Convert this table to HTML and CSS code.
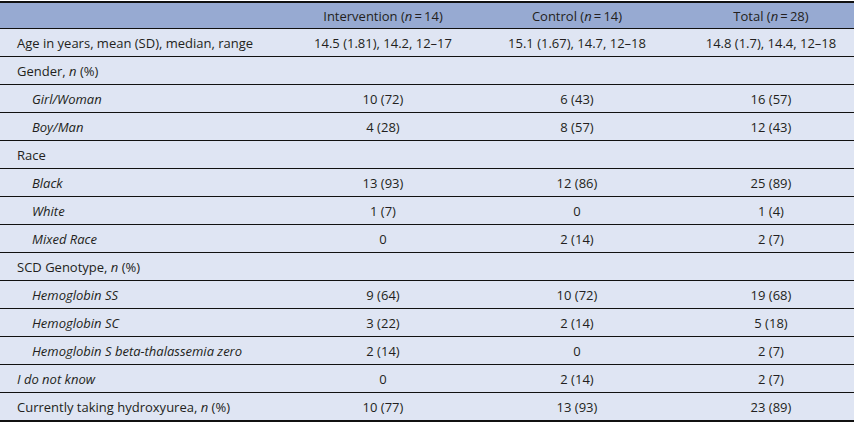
FILE: index.html
```html
<!DOCTYPE html>
<html lang="en">
<head>
    <meta charset="UTF-8">
    <title>Participant characteristics</title>
    <link rel="stylesheet" href="styles.css">
</head>
<body>
<table class="table">
    <colgroup>
        <col class="table__col-label">
        <col class="table__col-group">
        <col class="table__col-control">
        <col class="table__col-total">
    </colgroup>
    <thead>
    <tr class="table__head">
        <th></th>
        <th>Intervention (<i>n</i>&#8201;=&#8201;14)</th>
        <th>Control (<i>n</i>&#8201;=&#8201;14)</th>
        <th class="table__total">Total (<i>n</i>&#8201;=&#8201;28)</th>
    </tr>
    </thead>
    <tbody>
    <tr>
        <td class="table__label">Age in years, mean (SD), median, range</td>
        <td>14.5 (1.81), 14.2, 12–17</td>
        <td>15.1 (1.67), 14.7, 12–18</td>
        <td class="table__total">14.8 (1.7), 14.4, 12–18</td>
    </tr>
    <tr>
        <td class="table__label">Gender, <i>n</i> (%)</td>
        <td></td><td></td><td class="table__total"></td>
    </tr>
    <tr>
        <td class="table__label table__label--sub">Girl/Woman</td>
        <td>10 (72)</td><td>6 (43)</td><td class="table__total">16 (57)</td>
    </tr>
    <tr>
        <td class="table__label table__label--sub">Boy/Man</td>
        <td>4 (28)</td><td>8 (57)</td><td class="table__total">12 (43)</td>
    </tr>
    <tr>
        <td class="table__label">Race</td>
        <td></td><td></td><td class="table__total"></td>
    </tr>
    <tr>
        <td class="table__label table__label--sub">Black</td>
        <td>13 (93)</td><td>12 (86)</td><td class="table__total">25 (89)</td>
    </tr>
    <tr>
        <td class="table__label table__label--sub">White</td>
        <td>1 (7)</td><td>0</td><td class="table__total">1 (4)</td>
    </tr>
    <tr>
        <td class="table__label table__label--sub">Mixed Race</td>
        <td>0</td><td>2 (14)</td><td class="table__total">2 (7)</td>
    </tr>
    <tr>
        <td class="table__label">SCD Genotype, <i>n</i> (%)</td>
        <td></td><td></td><td class="table__total"></td>
    </tr>
    <tr>
        <td class="table__label table__label--sub">Hemoglobin SS</td>
        <td>9 (64)</td><td>10 (72)</td><td class="table__total">19 (68)</td>
    </tr>
    <tr>
        <td class="table__label table__label--sub">Hemoglobin SC</td>
        <td>3 (22)</td><td>2 (14)</td><td class="table__total">5 (18)</td>
    </tr>
    <tr>
        <td class="table__label table__label--sub">Hemoglobin S beta-thalassemia zero</td>
        <td>2 (14)</td><td>0</td><td class="table__total">2 (7)</td>
    </tr>
    <tr>
        <td class="table__label"><i>I do not know</i></td>
        <td>0</td><td>2 (14)</td><td class="table__total">2 (7)</td>
    </tr>
    <tr>
        <td class="table__label">Currently taking hydroxyurea, <i>n</i> (%)</td>
        <td>10 (77)</td><td>13 (93)</td><td class="table__total">23 (89)</td>
    </tr>
    </tbody>
</table>
</body>
</html>
```

FILE: styles.css
```css
body {
    margin: 0;
    background: #fff;
    font-family: "Open Sans", "Noto Sans", sans-serif;
    font-size: 13px;
    color: #231f20;
}

.table {
    width: 854px;
    margin-top: 1px;
    border-collapse: collapse;
    table-layout: fixed;
    background: #dfe5f3;
    border-top: 2px solid #111;
    border-bottom: 2px solid #111;
}

.table__col-label {
    width: 290px;
}

.table__col-group {
    width: 186px;
}

.table__col-control {
    width: 202px;
}

.table__col-total {
    width: 176px;
}

.table__head {
    background: #97aad2;
}

.table__head th {
    height: 25px;
    padding: 0;
    font-weight: normal;
    text-align: center;
    border-bottom: 1.5px solid #111;
}

.table td {
    height: 27px;
    padding: 0;
    text-align: center;
    border-bottom: 1.5px solid #111;
}

.table .table__total {
    padding-left: 10px;
}

.table .table__label {
    text-align: left;
    padding-left: 17px;
}

.table .table__label--sub {
    padding-left: 32px;
    font-style: italic;
}
```
